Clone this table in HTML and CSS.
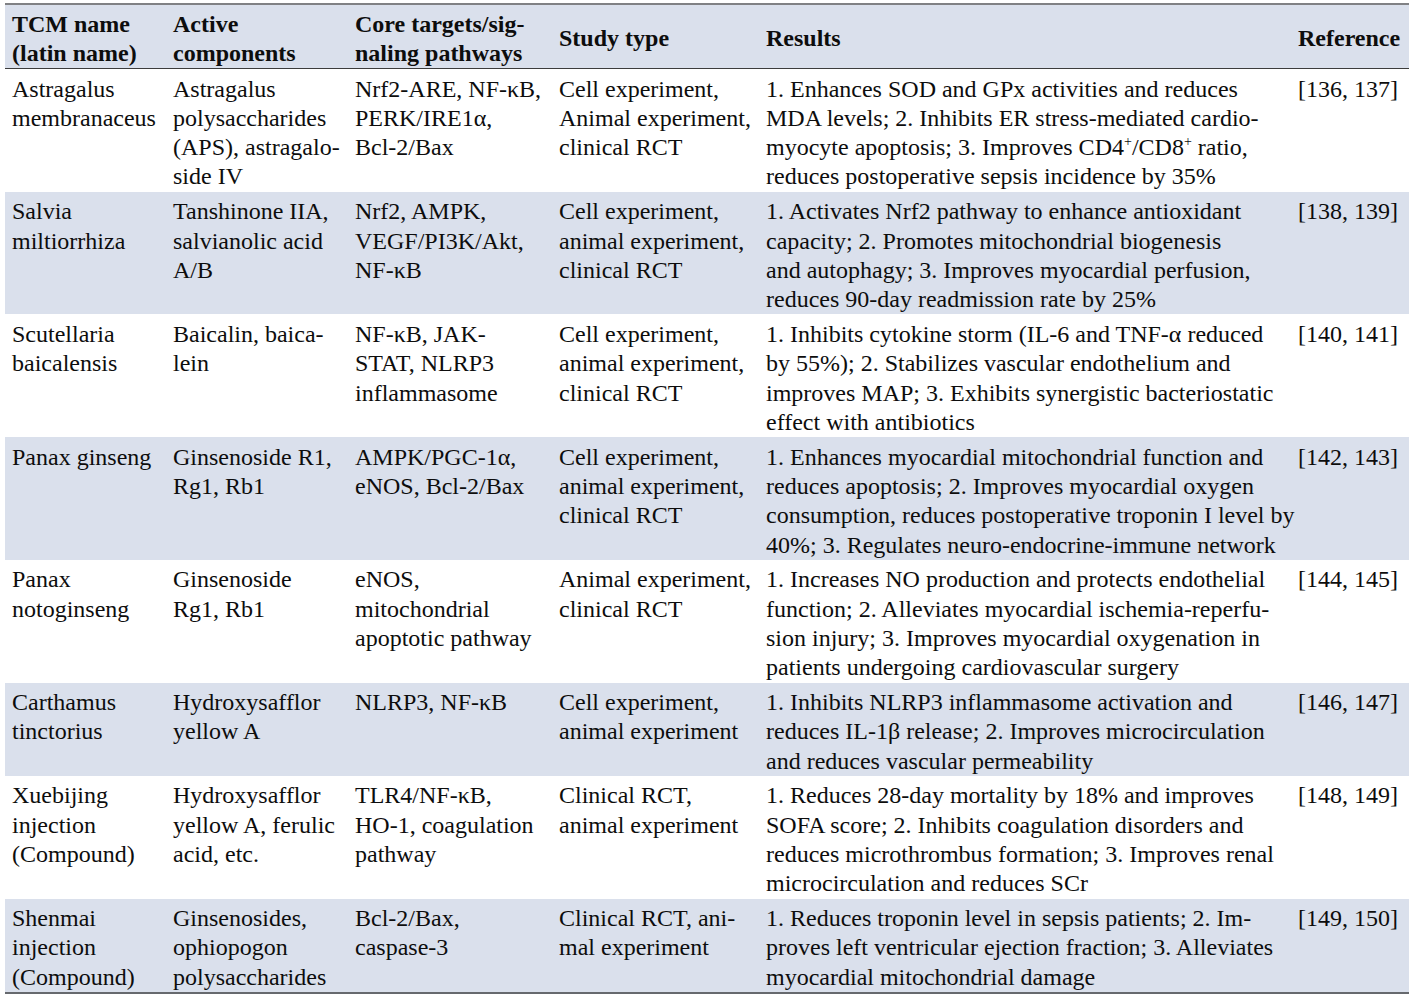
FILE: index.html
```html
<!DOCTYPE html>
<html lang="en">
<head>
<meta charset="utf-8">
<title>TCM table</title>
<link rel="stylesheet" href="styles.css">
</head>
<body>
<table class="tcm">
  <colgroup>
    <col class="c1"><col class="c2"><col class="c3"><col class="c4"><col class="c5"><col class="c6">
  </colgroup>
  <thead>
    <tr class="alt">
      <th>TCM name<br>(latin name)</th>
      <th>Active<br>components</th>
      <th>Core targets/sig-<br>naling pathways</th>
      <th>Study type</th>
      <th>Results</th>
      <th>Reference</th>
    </tr>
  </thead>
  <tbody>
    <tr>
      <td>Astragalus<br>membranaceus</td>
      <td>Astragalus<br>polysaccharides<br>(APS), astragalo-<br>side IV</td>
      <td>Nrf2-ARE, NF-κB,<br>PERK/IRE1α,<br>Bcl-2/Bax</td>
      <td>Cell experiment,<br>Animal experiment,<br>clinical RCT</td>
      <td>1. Enhances SOD and GPx activities and reduces<br>MDA levels; 2. Inhibits ER stress-mediated cardio-<br>myocyte apoptosis; 3. Improves CD4<sup class="sp">+</sup>/CD8<sup class="sp">+</sup> ratio,<br>reduces postoperative sepsis incidence by 35%</td>
      <td>[136, 137]</td>
    </tr>
    <tr class="alt">
      <td>Salvia<br>miltiorrhiza</td>
      <td>Tanshinone IIA,<br>salvianolic acid<br>A/B</td>
      <td>Nrf2, AMPK,<br>VEGF/PI3K/Akt,<br>NF-κB</td>
      <td>Cell experiment,<br>animal experiment,<br>clinical RCT</td>
      <td>1. Activates Nrf2 pathway to enhance antioxidant<br>capacity; 2. Promotes mitochondrial biogenesis<br>and autophagy; 3. Improves myocardial perfusion,<br>reduces 90-day readmission rate by 25%</td>
      <td>[138, 139]</td>
    </tr>
    <tr>
      <td>Scutellaria<br>baicalensis</td>
      <td>Baicalin, baica-<br>lein</td>
      <td>NF-κB, JAK-<br>STAT, NLRP3<br>inflammasome</td>
      <td>Cell experiment,<br>animal experiment,<br>clinical RCT</td>
      <td>1. Inhibits cytokine storm (IL-6 and TNF-α reduced<br>by 55%); 2. Stabilizes vascular endothelium and<br>improves MAP; 3. Exhibits synergistic bacteriostatic<br>effect with antibiotics</td>
      <td>[140, 141]</td>
    </tr>
    <tr class="alt">
      <td>Panax ginseng</td>
      <td>Ginsenoside R1,<br>Rg1, Rb1</td>
      <td>AMPK/PGC-1α,<br>eNOS, Bcl-2/Bax</td>
      <td>Cell experiment,<br>animal experiment,<br>clinical RCT</td>
      <td>1. Enhances myocardial mitochondrial function and<br>reduces apoptosis; 2. Improves myocardial oxygen<br>consumption, reduces postoperative troponin I level by<br>40%; 3. Regulates neuro-endocrine-immune network</td>
      <td>[142, 143]</td>
    </tr>
    <tr>
      <td>Panax<br>notoginseng</td>
      <td>Ginsenoside<br>Rg1, Rb1</td>
      <td>eNOS,<br>mitochondrial<br>apoptotic pathway</td>
      <td>Animal experiment,<br>clinical RCT</td>
      <td>1. Increases NO production and protects endothelial<br>function; 2. Alleviates myocardial ischemia-reperfu-<br>sion injury; 3. Improves myocardial oxygenation in<br>patients undergoing cardiovascular surgery</td>
      <td>[144, 145]</td>
    </tr>
    <tr class="alt">
      <td>Carthamus<br>tinctorius</td>
      <td>Hydroxysafflor<br>yellow A</td>
      <td>NLRP3, NF-κB</td>
      <td>Cell experiment,<br>animal experiment</td>
      <td>1. Inhibits NLRP3 inflammasome activation and<br>reduces IL-1β release; 2. Improves microcirculation<br>and reduces vascular permeability</td>
      <td>[146, 147]</td>
    </tr>
    <tr>
      <td>Xuebijing<br>injection<br>(Compound)</td>
      <td>Hydroxysafflor<br>yellow A, ferulic<br>acid, etc.</td>
      <td>TLR4/NF-κB,<br>HO-1, coagulation<br>pathway</td>
      <td>Clinical RCT,<br>animal experiment</td>
      <td>1. Reduces 28-day mortality by 18% and improves<br>SOFA score; 2. Inhibits coagulation disorders and<br>reduces microthrombus formation; 3. Improves renal<br>microcirculation and reduces SCr</td>
      <td>[148, 149]</td>
    </tr>
    <tr class="alt">
      <td>Shenmai<br>injection<br>(Compound)</td>
      <td>Ginsenosides,<br>ophiopogon<br>polysaccharides</td>
      <td>Bcl-2/Bax,<br>caspase-3</td>
      <td>Clinical RCT, ani-<br>mal experiment</td>
      <td>1. Reduces troponin level in sepsis patients; 2. Im-<br>proves left ventricular ejection fraction; 3. Alleviates<br>myocardial mitochondrial damage</td>
      <td>[149, 150]</td>
    </tr>
  </tbody>
</table>
</body>
</html>
```

FILE: styles.css
```css
html, body {
  margin: 0;
  background: #ffffff;
}
body {
  padding: 3px 0 0 5px;
  font-family: "Liberation Serif", "Times New Roman", serif;
  color: #0d0d0d;
}
.tcm {
  border-collapse: collapse;
  table-layout: fixed;
  width: 1404px;
  font-size: 24px;
  line-height: 29.3px;
  border-top: 2px solid #808184;
  border-bottom: 2px solid #66696e;
}
.c1 { width: 161px; }
.c2 { width: 182px; }
.c3 { width: 204px; }
.c4 { width: 207px; }
.c5 { width: 532px; }
.c6 { width: 118px; }
.tcm th,
.tcm td {
  padding: 5.5px 6px 0 7px;
  text-align: left;
  white-space: nowrap;
  overflow: visible;
}
.tcm th {
  font-weight: bold;
  vertical-align: middle;
  padding-top: 4.5px;
  padding-bottom: 0;
}
.tcm thead tr {
  border-bottom: 1px solid #3c3c3c;
}
.tcm td {
  vertical-align: top;
}
.tcm tr.alt {
  background: #dae0ec;
}
.sp {
  font-size: 14px;
  line-height: 0;
  vertical-align: 9px;
}
```
